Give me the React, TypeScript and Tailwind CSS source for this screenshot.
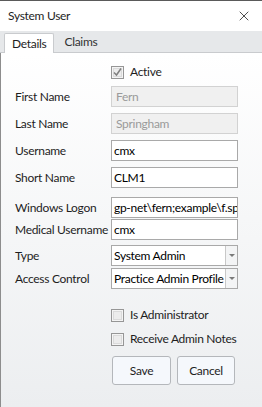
import { X } from "lucide-react";

const font = { fontFamily: 'Lato, "Noto Sans", sans-serif' };
const txt = "text-[12px] tracking-[-0.3px]";

function Field({ label, value, disabled, mt }: { label: string; value: string; disabled?: boolean; mt: string }) {
  return (
    <div className={`flex items-center h-[21px] ${mt}`}>
      <span className={`w-[96px] ${txt} text-[#1e1e1e] whitespace-nowrap`}>{label}</span>
      <div
        className={`w-[127px] h-full flex items-center px-[2px] border overflow-hidden whitespace-nowrap ${txt} ${
          disabled ? "bg-[#f0f0f0] border-[#d2d2d2] text-[#9a9a9a] pl-[4px]" : "bg-white border-[#a9a9a9] text-black"
        }`}
      >
        {value}
      </div>
    </div>
  );
}

function Select({ label, value, mt }: { label: string; value: string; mt: string }) {
  return (
    <div className={`flex items-center h-[21px] ${mt}`}>
      <span className={`w-[96px] ${txt} text-[#1e1e1e]`}>{label}</span>
      <div className="w-[127px] h-full flex border border-[#a9a9a9] bg-white">
        <div className={`flex-1 px-[2px] flex items-center overflow-hidden whitespace-nowrap ${txt} text-black`}>{value}</div>
        <div className="w-[12px] border-l border-[#c8c8c8] bg-[#f3f4f5] flex items-center justify-center">
          <span className="w-0 h-0 border-l-[3px] border-r-[3px] border-t-[3px] border-l-transparent border-r-transparent border-t-[#7a7a7a]" />
        </div>
      </div>
    </div>
  );
}

function Check({ label, checked, mt }: { label: string; checked?: boolean; mt: string }) {
  return (
    <div className={`flex items-center h-[20px] pl-[96px] ${mt}`}>
      <span className="w-[13px] h-[13px] border border-[#969696] bg-[#f4f4f4] flex items-center justify-center">
        <span className="w-[9px] h-[9px] border border-[#dadada] bg-[#ececec] flex items-center justify-center">
          {checked && (
            <svg width="9" height="9" viewBox="0 0 9 9" className="shrink-0">
              <path d="M1 4.5 L3.5 7 L8 0.5" stroke="#808080" strokeWidth="1.5" fill="none" />
            </svg>
          )}
        </span>
      </span>
      <span className={`ml-[6px] ${txt} text-[#1e1e1e] whitespace-nowrap`}>{label}</span>
    </div>
  );
}

export default function App() {
  return (
    <div className="w-[262px] h-[407px] flex flex-col bg-white border-t border-[#5a5a5a]" style={font}>
      <div className="h-[30px] flex items-center justify-between pl-[8px] pr-[10px]">
        <span className={`${txt} text-[#1e1e1e]`}>System User</span>
        <X size={16} strokeWidth={1.2} className="text-[#222]" />
      </div>
      <div className="h-[22px] bg-[#e6e8ea] flex items-end pl-[4px] border-b border-[#c9cbce]">
        <div className={`h-[20px] px-[7px] bg-white border border-b-0 border-[#c9cbce] rounded-t-[2px] ${txt} text-[#1e1e1e] flex items-center -mb-px`}>
          Details
        </div>
        <div className={`h-[20px] px-[10px] ${txt} text-[#333] flex items-center`}>Claims</div>
      </div>
      <div className="flex-1 flex flex-col border-l border-[#8d8d8d] pl-[14px] pt-[9px] bg-gradient-to-b from-white to-[#eceef0]">
        <Check label="Active" checked mt="" />
        <Field label="First Name" value="Fern" disabled mt="mt-[4px]" />
        <Field label="Last Name" value="Springham" disabled mt="mt-[6px]" />
        <Field label="Username" value="cmx" mt="mt-[6px]" />
        <Field label="Short Name" value="CLM1" mt="mt-[6px]" />
        <Field label="Windows Logon" value="gp-net\fern;example\f.springham" mt="mt-[9px]" />
        <Field label="Medical Username" value="cmx" mt="mt-[1px]" />
        <Select label="Type" value="System Admin" mt="mt-[5px]" />
        <Select label="Access Control" value="Practice Admin Profile" mt="mt-[2px]" />
        <Check label="Is Administrator" mt="mt-[16px]" />
        <Check label="Receive Admin Notes" mt="mt-[4px]" />
        <div className="flex gap-[6px] pl-[97px] mt-[7px]">
          <button className={`w-[59px] h-[29px] rounded-[3px] border border-[#b4b7bb] bg-[#f5f8fc] ${txt} text-[#1e1e1e]`}>
            Save
          </button>
          <button className={`w-[58px] h-[29px] rounded-[3px] border border-[#b4b7bb] bg-[#f5f8fc] ${txt} text-[#1e1e1e]`}>
            Cancel
          </button>
        </div>
      </div>
    </div>
  );
}
